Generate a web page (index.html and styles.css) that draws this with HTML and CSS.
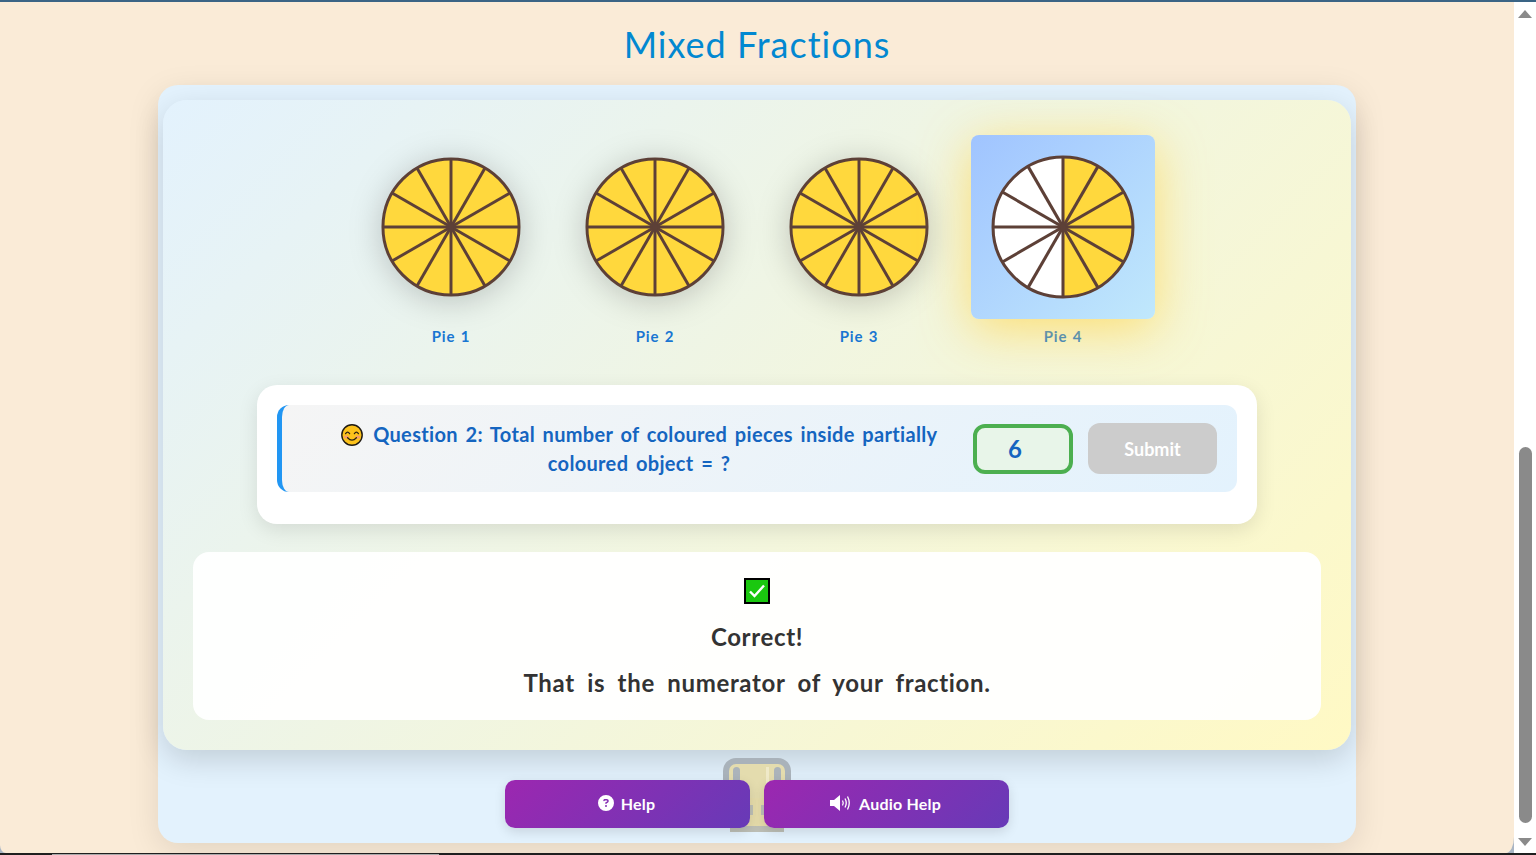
FILE: index.html
```html
<!DOCTYPE html>
<html>
  <head>
    <title>Mixed Fractions</title>
    <link rel="stylesheet" href="styles.css">
  </head>
  <body>
    <svg class="defs" width="0" height="0">
      <symbol id="spokes" viewBox="0 0 144 144">
        <g stroke="#5d4037" stroke-width="3" fill="none">
          <line x1="3" y1="72" x2="141" y2="72" />
          <line x1="72" y1="3" x2="72" y2="141" />
          <line x1="12.2" y1="37.5" x2="131.8" y2="106.5" />
          <line x1="12.2" y1="106.5" x2="131.8" y2="37.5" />
          <line x1="37.5" y1="12.2" x2="106.5" y2="131.8" />
          <line x1="37.5" y1="131.8" x2="106.5" y2="12.2" />
          <circle cx="72" cy="72" r="69" />
        </g>
        <circle cx="72" cy="72" r="3" fill="#5d4037" />
      </symbol>
    </svg>

    <div class="topbar"></div>

    <div class="window">
      <div class="page">
        <h1 class="title">Mixed Fractions</h1>

        <div class="outer-card">
          <div class="inner-card">
            <div class="pies">
              <div class="pie-item">
                <div class="pie-tile">
                  <svg class="pie" viewBox="0 0 144 144">
                    <circle cx="72" cy="72" r="69" fill="#ffd83d" />
                    <use href="#spokes" width="144" height="144" />
                  </svg>
                </div>
                <div class="pie-label">Pie 1</div>
              </div>
              <div class="pie-item">
                <div class="pie-tile">
                  <svg class="pie" viewBox="0 0 144 144">
                    <circle cx="72" cy="72" r="69" fill="#ffd83d" />
                    <use href="#spokes" width="144" height="144" />
                  </svg>
                </div>
                <div class="pie-label">Pie 2</div>
              </div>
              <div class="pie-item">
                <div class="pie-tile">
                  <svg class="pie" viewBox="0 0 144 144">
                    <circle cx="72" cy="72" r="69" fill="#ffd83d" />
                    <use href="#spokes" width="144" height="144" />
                  </svg>
                </div>
                <div class="pie-label">Pie 3</div>
              </div>
              <div class="pie-item">
                <div class="pie-tile selected">
                  <svg class="pie" viewBox="0 0 144 144">
                    <circle cx="72" cy="72" r="69" fill="#fff" />
                    <path d="M72 3A69 69 0 0 1 72 141Z" fill="#ffd83d" />
                    <use href="#spokes" width="144" height="144" />
                  </svg>
                </div>
                <div class="pie-label">Pie 4</div>
              </div>
            </div>

            <div class="question-panel">
              <div class="question-row">
                <div class="question-text">
                  <svg class="emoji" viewBox="0 0 22 22">
                    <circle cx="11" cy="11" r="10.2" fill="#fcc21b" stroke="#1f1a12" stroke-width="1.4" />
                    <ellipse cx="5.2" cy="13" rx="2.4" ry="1.6" fill="#f59a6a" />
                    <ellipse cx="16.8" cy="13" rx="2.4" ry="1.6" fill="#f59a6a" />
                    <path d="M4.6 9.6Q6.6 6.6 8.6 9.6M13.4 9.6Q15.4 6.6 17.4 9.6M6.6 13.8Q11 18.6 15.4 13.8" fill="none" stroke="#2b2113" stroke-width="1.3" stroke-linecap="round" />
                  </svg>
                  Question 2: Total number of coloured pieces inside partially<br>coloured object = ?
                </div>
                <input class="answer" type="text" value="6" disabled />
                <button class="submit" disabled>Submit</button>
              </div>
            </div>

            <div class="feedback">
              <svg class="check" viewBox="0 0 26 26">
                <rect x="1" y="1" width="24" height="24" fill="#1ac80f" stroke="#000" stroke-width="2" />
                <path d="M6 13.5L10.5 18L20 7.5" fill="none" stroke="#fff" stroke-width="2.4" />
              </svg>
              <p class="feedback-line">Correct!</p>
              <p class="feedback-line">That is the numerator of your fraction.</p>
            </div>
          </div>

          <div class="help-row">
            <svg class="trophy" viewBox="0 0 68 74">
              <rect x="3" y="3" width="62" height="44" rx="10" fill="#e4dcae" stroke="#a9b2ba" stroke-width="6" />
              <rect x="10" y="9" width="7" height="26" rx="3.5" fill="#abb3ba" />
              <rect x="51" y="9" width="7" height="26" rx="3.5" fill="#abb3ba" />
              <rect x="43" y="9" width="3" height="22" fill="#efe9c8" />
              <rect x="22" y="40" width="24" height="28" fill="#e6dcaa" />
              <rect x="27" y="47" width="3" height="10" fill="#bdbfb6" />
              <rect x="38" y="47" width="3" height="10" fill="#bdbfb6" />
              <rect x="7" y="68" width="54" height="6" fill="#bdbfb6" />
            </svg>
            <button class="help-button">
              <svg class="help-icon" viewBox="0 0 512 512">
                <path fill="#fff" d="M256 512A256 256 0 1 0 256 0a256 256 0 1 0 0 512zM169.8 165.3c7.9-22.3 29.1-37.3 52.8-37.3h58.3c34.9 0 63.1 28.3 63.1 63.1c0 22.6-12.1 43.5-31.7 54.8L280 264.4c-.2 13-10.9 23.6-24 23.6c-13.3 0-24-10.7-24-24V250.5c0-8.6 4.6-16.5 12.1-20.8l44.3-25.4c4.7-2.7 7.6-7.7 7.6-13.1c0-8.4-6.8-15.1-15.1-15.1H222.6c-3.4 0-6.4 2.1-7.5 5.3l-.4 1.2c-4.4 12.5-18.2 19-30.6 14.6s-19-18.2-14.6-30.6l.4-1.2zM224 352a32 32 0 1 1 64 0 32 32 0 1 1 -64 0z" />
              </svg>
              Help
            </button>
            <button class="help-button">
              <svg class="audio-icon" viewBox="0 0 22 16">
                <path fill="#fff" d="M0 5H4L10 0V16L4 11H0Z" />
                <path fill="none" stroke="#fff" stroke-width="1.3" d="M12.5 5.5Q14 8 12.5 10.5M15 3.5Q17.5 8 15 12.5M17.5 1.5Q21 8 17.5 14.5" />
              </svg>
              Audio Help
            </button>
          </div>
        </div>
      </div>

      <div class="scrollbar">
        <div class="arrow-up"></div>
        <div class="thumb"></div>
        <div class="arrow-down"></div>
      </div>
    </div>

    <div class="bottombar">
      <div class="taskbar-item"></div>
    </div>
  </body>
</html>
```

FILE: styles.css
```css
html,
body {
  margin: 0;
  height: 855px;
  overflow: hidden;
}

body {
  font-family: "Lato", "Open Sans", sans-serif;
  background-color: #a9b5c4;
  display: flex;
  flex-direction: column;
}

.defs {
  position: absolute;
}

.topbar {
  height: 2px;
  background-color: #3a6485;
}

.window {
  flex: 1;
  display: flex;
  min-height: 0;
}

.page {
  flex: 1;
  min-width: 0;
  overflow: hidden;
  background-color: #faebd7;
  border-radius: 0 0 8px 6px / 0 0 16px 8px;
}

.title {
  margin: 18px 0 17px;
  font-size: 36px;
  line-height: 48px;
  font-weight: 400;
  letter-spacing: 1px;
  text-align: center;
  color: #0288d1;
}

.outer-card {
  width: 1198px;
  height: 758px;
  box-sizing: border-box;
  margin: 0 auto;
  padding: 15px 5px;
  background-color: #e3f2fd;
  border-radius: 20px;
  box-shadow: 0 8px 32px rgba(0, 0, 0, 0.1);
}

.inner-card {
  height: 650px;
  box-sizing: border-box;
  padding: 35px 30px 30px;
  border-radius: 24px;
  background: linear-gradient(135deg, #e3f2fd, #fff9c4);
  box-shadow: 0 10px 30px rgba(0, 0, 0, 0.15);
}

.pies {
  display: flex;
  justify-content: center;
  gap: 20px;
}

.pie-item {
  width: 184px;
}

.pie-tile {
  position: relative;
  height: 184px;
  display: flex;
  align-items: center;
  justify-content: center;
  border-radius: 8px;
}

.pie-tile.selected {
  background: linear-gradient(135deg, #a0c4ff, #c0e8fc);
  box-shadow: 0 10px 50px rgba(255, 213, 79, 0.75);
}

.pie {
  width: 142px;
  height: 142px;
  filter: drop-shadow(0 4px 16px rgba(0, 0, 0, 0.2));
}

.selected .pie {
  width: 146px;
  height: 146px;
  filter: none;
}

.pie-label {
  margin-top: 7px;
  text-align: center;
  font-size: 15px;
  line-height: 20px;
  font-weight: 700;
  letter-spacing: 0.8px;
  word-spacing: 1px;
  color: #1976d2;
}

.question-panel {
  width: 1000px;
  box-sizing: border-box;
  margin: 39px auto 0;
  padding: 20px 20px 32px;
  background-color: #fff;
  border-radius: 20px;
  box-shadow: 0 6px 20px rgba(0, 0, 0, 0.1);
}

.question-row {
  height: 87px;
  box-sizing: border-box;
  display: flex;
  align-items: center;
  padding-right: 20px;
  border-left: 5px solid #2196f3;
  border-radius: 12px;
  background: linear-gradient(135deg, #f5f5f5, #e3f2fd);
}

.question-text {
  width: 691px;
  box-sizing: border-box;
  padding-left: 23px;
  text-align: center;
  font-size: 20px;
  line-height: 29px;
  font-weight: 700;
  letter-spacing: 0.33px;
  word-spacing: 2.4px;
  color: #1565c0;
}

.emoji {
  width: 22px;
  height: 22px;
  margin-right: 3px;
  vertical-align: -4px;
}

.answer {
  width: 100px;
  height: 50px;
  box-sizing: border-box;
  padding: 0 16px 0 0;
  text-align: center;
  font-family: inherit;
  font-size: 24px;
  font-weight: 700;
  color: #1565c0;
  background-color: #e8f5e9;
  border: 4px solid #4caf50;
  border-radius: 12px;
  opacity: 1;
}

.submit {
  width: 129px;
  height: 51px;
  margin-left: 15px;
  font-family: inherit;
  font-size: 18px;
  font-weight: 700;
  color: #fff;
  background-color: #ccc;
  border: none;
  border-radius: 12px;
}

.feedback {
  height: 168px;
  box-sizing: border-box;
  margin-top: 28px;
  padding-top: 26px;
  text-align: center;
  background-color: rgba(255, 255, 255, 0.95);
  border-radius: 16px;
}

.check {
  display: block;
  width: 26px;
  height: 26px;
  margin: 0 auto 17px;
}

.feedback-line {
  margin: 0 0 14px;
  font-size: 24px;
  line-height: 32px;
  font-weight: 700;
  letter-spacing: 0.65px;
  word-spacing: 6px;
  color: #333;
}

.help-row {
  position: relative;
  display: flex;
  justify-content: center;
  gap: 14px;
  margin-top: 30px;
}

.trophy {
  position: absolute;
  left: 560px;
  top: -22px;
  width: 68px;
  height: 74px;
}

.help-button {
  position: relative;
  width: 245px;
  height: 48px;
  display: flex;
  align-items: center;
  justify-content: center;
  gap: 7px;
  padding: 0 2px 2px 0;
  font-family: inherit;
  font-size: 16px;
  font-weight: 700;
  letter-spacing: 0.2px;
  color: #fff;
  background: linear-gradient(135deg, #9c27b0, #673ab7);
  border: none;
  border-radius: 10px;
  box-shadow: 0 4px 12px rgba(0, 0, 0, 0.12);
}

.help-icon {
  width: 16px;
  height: 16px;
}

.audio-icon {
  width: 22px;
  height: 16px;
}

.scrollbar {
  width: 22px;
  display: flex;
  flex-direction: column;
  align-items: center;
  background-color: #fff;
}

.arrow-up {
  margin-top: 8px;
  border-left: 7.5px solid transparent;
  border-right: 7.5px solid transparent;
  border-bottom: 8px solid #8a8a8a;
}

.thumb {
  width: 13px;
  height: 376px;
  margin-top: auto;
  background-color: #8a8a8a;
  border-radius: 7px;
}

.arrow-down {
  margin-top: 15px;
  margin-bottom: 7px;
  border-left: 7.5px solid transparent;
  border-right: 7.5px solid transparent;
  border-top: 8px solid #8a8a8a;
}

.bottombar {
  height: 2px;
  background-color: #1f1f1f;
  position: relative;
}

.taskbar-item {
  position: absolute;
  left: 52px;
  top: 1px;
  width: 387px;
  height: 1px;
  background-color: #aaa;
}
```
